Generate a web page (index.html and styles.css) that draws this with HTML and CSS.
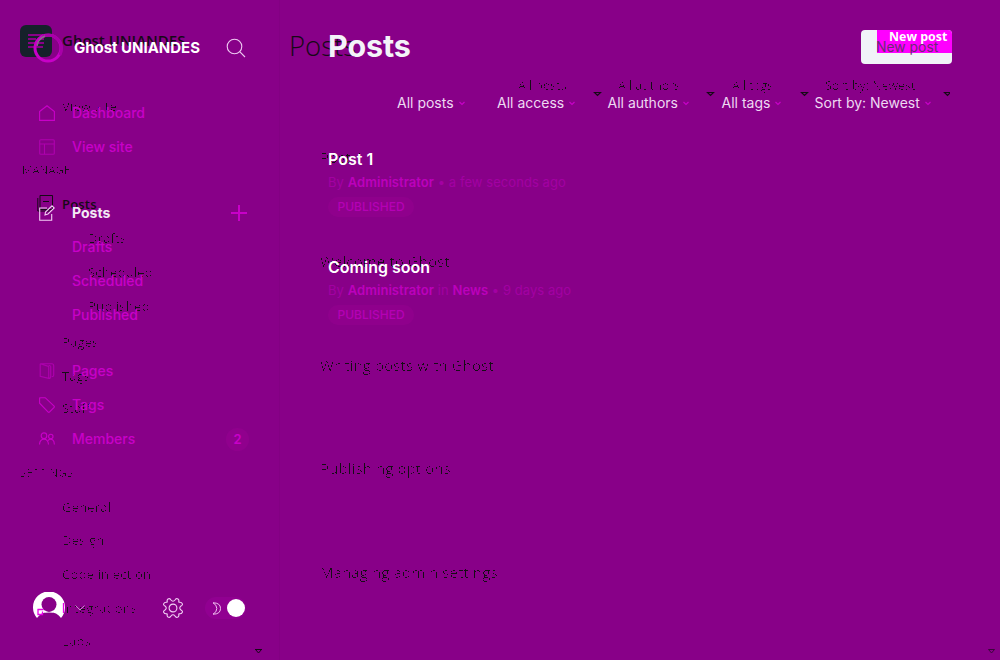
FILE: index.html
```html
<!DOCTYPE html>
<html lang="en">
<head>
<meta charset="utf-8">
<title>Posts</title>
<link rel="stylesheet" href="styles.css">
</head>
<body>
<svg class="defs" width="0" height="0"><filter id="erode" x="-5%" y="-5%" width="110%" height="110%"><feComponentTransfer><feFuncA type="discrete" tableValues="0 0 0 0 1"/></feComponentTransfer></filter></svg>
<div class="app">
  <div class="under">
    <aside class="u-side">
      <div class="u-brand"><svg width="32" height="32" viewBox="0 0 32 32"><rect width="32" height="32" rx="6" fill="#15212a"/><path d="M8 10h15M8 14h8m3 0h5M8 18h16M8 22h15" stroke="#880088" stroke-width="2"/></svg><span>Ghost UNIANDES</span></div>
      <div class="u-row u-view thin">View site</div>
      <div class="u-head thin">MANAGE</div>
      <div class="u-row u-posts">Posts<svg class="u-icon" width="17" height="17" viewBox="0 0 17 17" fill="none" stroke="#160916"><path d="M3 .5h12.500v14H3zM.8 3v13H13M6 6.500h6"/></svg></div>
      <div class="u-row sub thin">Drafts</div>
      <div class="u-row sub thin">Scheduled</div>
      <div class="u-row sub thin">Published</div>
      <div class="u-row u-pages thin">Pages</div>
      <div class="u-row thin">Tags</div>
      <div class="u-row u-staff thin">Staff</div>
      <div class="u-head settings thin">SETTINGS</div>
      <div class="u-row thin">General</div>
      <div class="u-row thin">Design</div>
      <div class="u-row thin">Code injection</div>
      <div class="u-row thin">Integrations</div>
      <div class="u-row thin">Labs</div>
      <svg class="corner" width="7" height="5" viewBox="0 0 7 5"><path d="M0 .5h7M.5.500L3.500 4 6.500.500" fill="none" stroke="#160916"/></svg>
    </aside>
    <section class="u-main">
      <div class="u-title">Posts</div>
      <div class="u-filters">
        <span class="thin">All posts</span><span class="thin">All authors</span><span class="thin">All tags</span><span class="thin">Sort by: Newest</span>
      </div>
      <div class="u-carets"><svg width="360" height="6" viewBox="0 0 360 6" fill="none" stroke="#160916" stroke-width="1.200"><path d="M4.500 1.500h6L7.500 4.500zM117.500 1.500h6l-3 3zM211.500 1.500h6l-3 3zM354.500 1.500h6l-3 3z"/></svg></div>
      <div class="u-list"><div class="thin">Post 1</div><div class="thin">Welcome to Ghost</div><div class="thin">Writing posts with Ghost</div><div class="thin">Publishing options</div><div class="thin">Managing admin settings</div></div>
      <svg class="corner" width="7" height="5" viewBox="0 0 7 5"><path d="M.5.5h6L3.500 4z" fill="none" stroke="#3b073b"/></svg>
    </section>
  </div>

  <aside class="side">
    <div class="brand">
      <svg width="32" height="32" viewBox="0 0 32 32" fill="none"><circle cx="15" cy="16" r="13" stroke="#c800c8" stroke-width="3"/><path d="M9 5q11-5 18 5q3 6 0 13" stroke="#a800a8" stroke-width="3"/><path d="M4 14q1-7 8-10" stroke="#8b658b" stroke-width="1.500"/></svg>
      <span>Ghost UNIANDES</span>
      <svg class="search" width="20" height="20" viewBox="0 0 20 20" fill="none" stroke="#eec9f2" stroke-width="1.100"><circle cx="8.500" cy="8.500" r="7.300"/><path d="M13.700 13.700l5.300 5.300"/></svg>
    </div>
    <nav>
      <a><svg class="ic" viewBox="0 0 16 16"><path d="M.6 6.500L8 .8l7.400 5.700v8.900H.6z"/></svg><span>Dashboard</span></a>
      <a class="last"><svg class="ic dim" viewBox="0 0 16 16"><rect x=".7" y=".7" width="14.600" height="14.600" rx="1"/><path d="M.7 5h14.600M5.500 5v10.300"/></svg><span>View site</span></a>
      <a class="active"><svg class="ic pale" viewBox="0 0 16 16"><path d="M8 3H.7v12.300h12V9M6 10l.5-3L13 .8 15.200 3 9 9z"/></svg><span>Posts</span><svg class="plus" width="16" height="16" viewBox="0 0 16 16"><path d="M8 0v16M0 8h16" stroke="#c800c8" stroke-width="2"/></svg></a>
      <a class="in"><span>Drafts</span></a>
      <a class="in"><span>Scheduled</span></a>
      <a class="in pub"><span>Published</span></a>
      <a><svg class="ic dim" viewBox="0 0 16 16"><path d="M1.200.8h11.500q2 0 2 2v9.500q0 1.500-2 1.500M1.200.8v12.500l8.500 2.100V3.500L1.200.8M9.700 15.400q2 0 2-2V3.500q0-1-2-1.300"/></svg><span>Pages</span></a>
      <a><svg class="ic" viewBox="0 0 16 16"><path d="M.6 1v5.200l8.600 8.900q.6.500 1.200 0l4.700-4.700q.5-.6 0-1.200L6.200.7H2z"/></svg><span>Tags</span></a>
      <a><svg class="ic" viewBox="0 0 16 16"><circle cx="5" cy="4.700" r="2.800"/><circle cx="11.800" cy="5.500" r="2.200"/><path d="M.5 13.500Q.8 8.300 5 8.300t4.500 5.200M9 9.500q2-2 4.600-.7 1.700 1.200 1.800 4.700"/></svg><span>Members</span><b class="count">2</b></a>
    </nav>
    <footer>
      <svg class="avatar" width="32" height="32" viewBox="0 0 32 32"><path d="M4 26A16 16 0 1 1 28 26Q24 20 16 20T4 26z" fill="#fff"/><circle cx="16" cy="12.500" r="7.500" fill="#880088"/><path d="M12 18.500q4 3 8 0v2h-8z" fill="#fff"/><path d="M4.500 17.500h6M5 17v5.500h4.500v-3M30.500 11v10" fill="none" stroke="#e800e8" stroke-width="1.300"/></svg>
      <svg class="chev" width="10" height="6" viewBox="0 0 10 6" fill="none" stroke="#c985cd"><path d="M.5.500L5 5 9.500.500"/></svg>
      <svg class="gear" width="20" height="20" viewBox="0 0 20 20" fill="none" stroke="#f3d0f6" stroke-width="1.100"><circle cx="10" cy="10" r="3.900"/><path d="M5 1Q7 0 8 2q2 2.500 4 0 1-2 3-1 1.200.8.800 2.500-.2 1 .7.700Q18.500 4 19.200 5.500 20 7 18 8q-2.500 2 0 4 2 1 1.200 2.500-.7 1.500-2.700 1.300-.9-.3-.7.700.4 1.700-.8 2.500-2 1-3-1-2-2.500-4 0-1 2-3 1-1.200-.8-.8-2.500.2-1-.7-.7-2 .2-2.700-1.300Q0 13 2 12q2.500-2 0-4Q0 7 .8 5.500 1.500 4 3.500 4.200q.9.300.7-.7Q3.800 1.800 5 1z"/></svg>
      <span class="toggle"><svg width="10" height="13" viewBox="0 0 10 13" fill="none" stroke="#f0c0f0"><path d="M1 .8q7.500 0 7.500 5.700T1 12.200q3.800-2 3.800-5.700T1 .8z"/></svg><i></i></span>
    </footer>
  </aside>

  <main>
    <header><h1>Posts</h1><div class="new"><div class="block">New post</div><span>New post</span></div></header>
    <div class="filters">
      <span>All posts<svg class="dn" viewBox="0 0 6 5"><path d="M.5 1L3 3.500 5.500 1"/></svg></span>
      <span>All access<svg class="dn" viewBox="0 0 6 5"><path d="M.5 1L3 3.500 5.500 1"/></svg></span>
      <span>All authors<svg class="dn" viewBox="0 0 6 5"><path d="M.5 1L3 3.500 5.500 1"/></svg></span>
      <span>All tags<svg class="dn" viewBox="0 0 6 5"><path d="M.5 1L3 3.500 5.500 1"/></svg></span>
      <span>Sort by: Newest<svg class="dn" viewBox="0 0 6 5"><path d="M.5 1L3 3.500 5.500 1"/></svg></span>
    </div>
    <article><h3>Post 1</h3><p>By <b>Administrator</b> • a few seconds ago</p><span class="pill">PUBLISHED</span></article>
    <article><h3>Coming soon</h3><p>By <b>Administrator</b> in <b>News</b> • 9 days ago</p><span class="pill">PUBLISHED</span></article>
  </main>
</div>
</body>
</html>
```
FILE: styles.css
```css
* { box-sizing: border-box; }
body { margin: 0; background: #880088; font-family: Inter, sans-serif; overflow: hidden; }
.defs { position: absolute; }
.app { position: relative; display: flex; width: 1000px; height: 660px; overflow: hidden; }
svg { flex: none; display: block; }

/* underlying layer */
.under { position: absolute; inset: 0; display: flex; color: #160916; font-family: "Open Sans", "Noto Sans", sans-serif; }
.thin { filter: url(#erode); }
.u-side { position: relative; width: 280px; height: 660px; padding-top: 25px; }
.u-brand { display: flex; height: 32px; padding-left: 20px; gap: 10px; font-size: 15px; font-weight: 600; line-height: 31px; white-space: nowrap; }
.u-row { height: 33.700px; padding-left: 62px; font-size: 13px; line-height: 33.700px; letter-spacing: .2px; }
.u-row.sub { padding-left: 88px; }
.u-view { margin-top: 33px; }
.u-head { height: 20px; margin-top: 36px; padding-left: 22px; font-size: 11.500px; line-height: 20px; letter-spacing: 0; }
.u-head.settings { margin-top: 37px; margin-bottom: 8px; padding-left: 20px; letter-spacing: .2px; }
.u-posts { position: relative; margin-top: 8px; margin-bottom: 1px; font-weight: 600; }
.u-pages { margin-top: 3px; }
.u-staff { margin-top: -2px; }
.u-icon { position: absolute; left: 37px; top: 7px; }
.corner { position: absolute; left: 255px; top: 649px; }
.u-main { position: relative; width: 720px; }
.u-main .corner { left: 708px; }
.u-title { height: 76px; padding: 25px 0 0 9px; font-size: 27.500px; font-weight: 300; line-height: 41px; }
.u-filters { display: grid; grid-template-columns: 100px 114px 93px 120px; height: 18px; padding-left: 238px; font-size: 12.400px; line-height: 19px; white-space: nowrap; }
.u-carets { height: 8px; margin: -3px 0 0 310px; }
.u-list { display: grid; grid-auto-rows: 103.800px; margin-top: 47px; padding-left: 40px; font-size: 15px; line-height: 22px; letter-spacing: .1px; }

/* sidebar */
.side { position: relative; flex: none; width: 280px; height: 660px; border-right: 1px solid #830083; }
.brand { display: flex; align-items: center; height: 32px; margin: 32px 33px 0; color: #fff; font-size: 15px; font-weight: 700; white-space: nowrap; }
.brand span { width: 154px; padding: 0 0 2px 9px; letter-spacing: -.02px; }
.search { margin-left: 9px; }
nav { padding-top: 32px; }
nav a { display: flex; align-items: center; height: 34px; padding: 0 32px 0 39px; color: #c800c8; font-size: 14px; font-weight: 500; }
nav a span { padding-bottom: 1px; }
nav .ic { width: 16px; height: 16px; margin-right: 17px; fill: none; stroke: #c800c8; stroke-width: 1.100; }
nav .dim { stroke: #ae00ae; }
nav .last { margin-bottom: 32px; }
nav .active { color: #f3eaf5; font-weight: 700; }
nav .pale { stroke: #f3cdf5; }
.plus { margin-left: auto; }
nav .in { padding-left: 72px; }
nav .pub { margin-bottom: 22px; }
.count { display: grid; place-items: center; width: 23px; height: 23px; margin-left: auto; margin-right: -2px; padding-bottom: 1px; border-radius: 50%; background: #90008d; font-size: 13px; font-weight: 600; }
footer { display: flex; align-items: center; height: 32px; margin: 136px 0 0 33px; }
.chev { margin-left: 10px; }
.gear { margin-left: 78px; }
.toggle { display: flex; align-items: center; justify-content: space-between; width: 41px; height: 22px; margin-left: 22px; padding: 0 1px 0 7px; border-radius: 11px; background: #910091; }
.toggle i { width: 18px; height: 18px; border-radius: 50%; background: #fff; }

/* content */
main { position: relative; width: 720px; padding: 30px 48px 0; }
header { display: flex; justify-content: space-between; height: 34px; }
h1 { margin: 0; color: #f4f3f9; font-size: 30.500px; line-height: 32px; font-weight: 700; letter-spacing: -.1px; }
.new { position: relative; width: 91px; height: 34px; border-radius: 4px; background: #f1f3f8; }
.block { width: 75px; height: 23px; margin-left: 16px; padding-left: 12px; border-top-right-radius: 4px; background: #f0f; color: #fff; font: 700 12.400px/14px "Open Sans", sans-serif; white-space: nowrap; }
.new span { position: absolute; left: 15px; top: 9px; color: #6b2c74; font-size: 13.900px; line-height: 17px; white-space: nowrap; }
.filters { display: grid; grid-template-columns: 100px 110.500px 114px 93px 130px; height: 18px; margin-top: 30px; padding-left: 69px; color: #eed9f2; font-size: 14px; line-height: 18px; white-space: nowrap; }
.filters span { display: flex; align-items: center; gap: 5px; }
.dn { width: 6px; height: 5px; fill: none; stroke: #c800c8; stroke-width: 1.200; }
article { height: 108px; padding-top: 37px; }
h3 { margin: 0; color: #fff; font-size: 16px; line-height: 20px; font-weight: 600; }
p { margin: 4px 0 6px; color: #a300a3; font-size: 13px; line-height: 18px; letter-spacing: .06px; }
p b { color: #bc00bc; font-weight: 600; }
.pill { display: block; width: 86px; height: 20px; border-radius: 10px; background: #8f008c; color: #b500b5; font-size: 12px; font-weight: 500; line-height: 20px; text-align: center; }
```
